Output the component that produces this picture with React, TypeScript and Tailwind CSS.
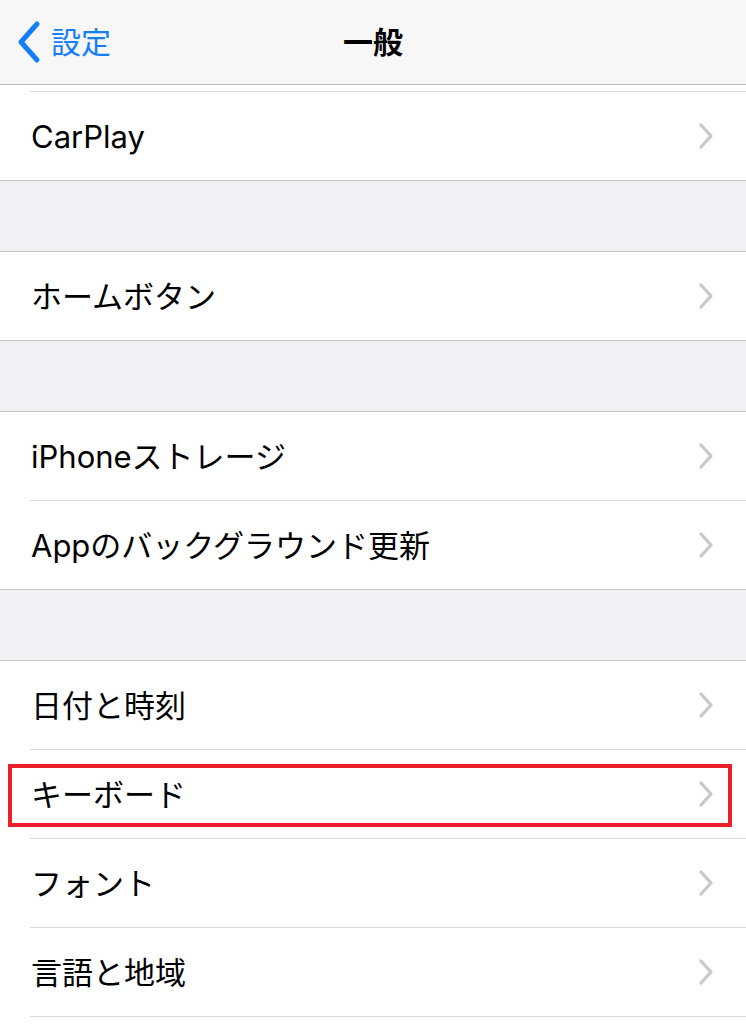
import React from "react";

const FONT = { fontFamily: '"Inter", "Noto Sans CJK JP", sans-serif' };

function Chevron() {
  return (
    <svg width="16" height="26" viewBox="0 0 16 26" className="shrink-0">
      <polyline
        points="3,2 13,13 3,24"
        fill="none"
        stroke="#c7c7cc"
        strokeWidth="3.2"
        strokeLinecap="round"
        strokeLinejoin="round"
      />
    </svg>
  );
}

function Row({
  label,
  inset,
  highlight,
}: {
  label: string;
  inset?: boolean;
  highlight?: boolean;
}) {
  return (
    <div className="relative bg-white">
      <div className="flex h-[88px] items-center justify-between pl-[31px] pr-[32px]">
        <span className="text-[31px] leading-none text-black">{label}</span>
        <Chevron />
      </div>
      <div className={inset ? "ml-[30px] h-px bg-[#d9d9dc]" : "h-px bg-[#c8c7cc]"} />
      {highlight && (
        <div className="pointer-events-none absolute left-[8px] right-[14px] top-[14px] bottom-[12px] border-[4px] border-[#ea1f2b]" />
      )}
    </div>
  );
}

function Gap() {
  return <div className="h-[71px] bg-[#f1f1f6] border-b border-[#c8c7cc]" />;
}

export default function App() {
  return (
    <div className="w-[746px] h-[1024px] overflow-hidden bg-white" style={FONT}>
      {/* nav bar */}
      <div className="relative flex h-[85px] items-center justify-center border-b border-[#b9b9bd] bg-[#f7f7f7]">
        <div className="absolute left-[15px] top-0 flex h-full items-center gap-[8px]">
          <svg width="28" height="44" viewBox="0 0 28 44">
            <polyline
              points="22,4 6,22 22,40"
              fill="none"
              stroke="#147efb"
              strokeWidth="5"
              strokeLinecap="round"
              strokeLinejoin="round"
            />
          </svg>
          <span className="text-[30px] leading-none text-[#147efb]">設定</span>
        </div>
        <span className="text-[30px] font-bold leading-none text-black">一般</span>
      </div>
      <div className="h-[6px] bg-white" />
      <div className="ml-[30px] h-px bg-[#d9d9dc]" />

      <Row label="CarPlay" />
      <Gap />
      <Row label="ホームボタン" />
      <Gap />
      <Row label="iPhoneストレージ" inset />
      <Row label="Appのバックグラウンド更新" />
      <Gap />
      <Row label="日付と時刻" inset />
      <Row label="キーボード" inset highlight />
      <Row label="フォント" inset />
      <Row label="言語と地域" inset />
    </div>
  );
}
